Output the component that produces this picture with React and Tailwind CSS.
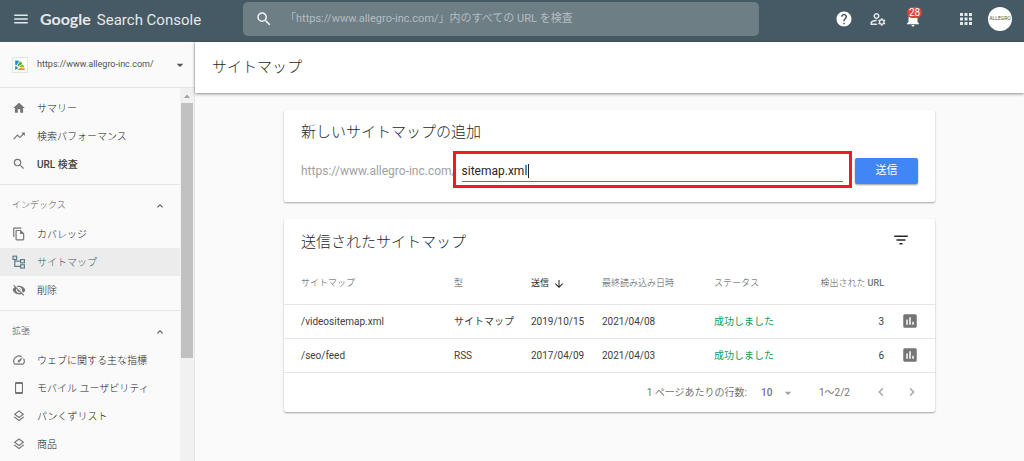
import {
  MdApps,
  MdArrowDownward,
  MdArrowDropDown,
  MdChevronLeft,
  MdChevronRight,
  MdExpandLess,
  MdFilterList,
  MdHelp,
  MdHome,
  MdInsertChart,
  MdMenu,
  MdNotifications,
  MdOutlineFileCopy,
  MdOutlineLayers,
  MdOutlineManageAccounts,
  MdSearch,
  MdSpeed,
  MdTrendingUp,
  MdVisibilityOff,
} from 'react-icons/md';

const SITE = 'https://www.allegro-inc.com/';

function SitemapIcon() {
  return (
    <svg viewBox="0 0 14 14" className="size-3.5" fill="none" stroke="currentColor" strokeWidth="1.2">
      <rect x="1" y="1.2" width="3.6" height="3.2" />
      <rect x="8.6" y="4.6" width="3.8" height="3.2" />
      <rect x="8.6" y="9.8" width="3.8" height="3.2" />
      <path d="M2.8 4.4v7h5.8M2.8 6.2h5.8" />
    </svg>
  );
}

function PhoneIcon() {
  return (
    <svg viewBox="0 0 14 14" className="size-3.5" fill="currentColor">
      <path fillRule="evenodd" d="M4 1h6a1 1 0 0 1 1 1v10a1 1 0 0 1-1 1H4a1 1 0 0 1-1-1V2a1 1 0 0 1 1-1zm.1 2v8h5.8V3z" />
    </svg>
  );
}

function SiteLogo() {
  return (
    <svg viewBox="0 0 16 16" className="size-4">
      <rect x=".5" y=".5" width="15" height="15" fill="#fff" stroke="#e4e4e4" />
      <path d="M3.2 3.4l4 .3-2.6 4.5-1.4-.4z" fill="#1a8fd1" />
      <path d="M7.8 4.2c1.2.6 2.1 1.5 2.6 2.5L6.6 9.6 5.4 8.3z" fill="#5cb531" />
      <path d="M10.8 7.2c.8 1 1.3 2.2 1.4 3.4l-4.2-.3-.8-.5z" fill="#7ac31f" />
      <path d="M3.2 9l1.4.4 1.6 1.6-3 2z" fill="#1a8fd1" />
      <path d="M5.2 13l2.4-2 5.2.5V13z" fill="#f28c1c" />
    </svg>
  );
}

const groups = [
  {
    items: [
      { label: 'サマリー', icon: <MdHome className="size-3.5" /> },
      { label: '検索パフォーマンス', icon: <MdTrendingUp className="size-3.5" /> },
      { label: 'URL 検査', icon: <MdSearch className="size-3.5" />, strong: true },
    ],
  },
  {
    title: 'インデックス',
    items: [
      { label: 'カバレッジ', icon: <MdOutlineFileCopy className="size-3.5" /> },
      { label: 'サイトマップ', icon: <SitemapIcon />, active: true },
      { label: '削除', icon: <MdVisibilityOff className="size-3.5" /> },
    ],
  },
  {
    title: '拡張',
    items: [
      { label: 'ウェブに関する主な指標', icon: <MdSpeed className="size-3.5" /> },
      { label: 'モバイル ユーザビリティ', icon: <PhoneIcon /> },
      { label: 'パンくずリスト', icon: <MdOutlineLayers className="size-3.5" /> },
      { label: '商品', icon: <MdOutlineLayers className="size-3.5" /> },
    ],
  },
];

const sitemaps = [
  { path: '/videositemap.xml', type: 'サイトマップ', sent: '2019/10/15', read: '2021/04/08', urls: 3 },
  { path: '/seo/feed', type: 'RSS', sent: '2017/04/09', read: '2021/04/03', urls: 6 },
];

function Header() {
  return (
    <header className="flex h-[42px] shrink-0 items-center bg-[#455a64] pb-1 text-white">
      <button aria-label="メニュー" className="ml-3 text-gray-200">
        <MdMenu className="size-[18px]" />
      </button>
      <a href="#" className="ml-2.5 flex w-[203px] items-baseline gap-1.5 text-gray-200">
        <span className="font-[Lato] text-[16px] font-bold">Google</span>
        <span className="text-[15px]">Search Console</span>
      </a>
      <label className="flex h-[34px] w-[516px] items-center rounded-[5px] bg-[#6d7e85] pl-3">
        <MdSearch className="size-[18px] text-gray-100" />
        <input
          type="search"
          aria-label="URL 検査"
          placeholder={`「${SITE}」内のすべての URL を検査`}
          className="ml-3 flex-1 bg-transparent text-[11px] outline-none placeholder:text-[#b4bdc1]"
        />
      </label>
      <div className="ml-auto flex items-center pr-3">
        <button aria-label="ヘルプ">
          <MdHelp className="size-[18px]" />
        </button>
        <button aria-label="ユーザーと権限" className="ml-4 text-gray-200">
          <MdOutlineManageAccounts className="size-[18px]" />
        </button>
        <button aria-label="通知" className="relative ml-[17px]">
          <MdNotifications className="size-[18px]" />
          <span className="absolute -top-[3px] left-[3px] rounded-full bg-[#db4437] px-0.5 text-[10px] leading-[11px]">
            28
          </span>
        </button>
        <button aria-label="アプリ" className="ml-[35px] text-gray-200">
          <MdApps className="size-[18px]" />
        </button>
        <button
          aria-label="アカウント"
          className="ml-[13px] flex size-6 items-center justify-center overflow-hidden rounded-full bg-white text-[5px] text-neutral-600"
        >
          ALLEGRO
        </button>
      </div>
    </header>
  );
}

function NavItem({ item }) {
  return (
    <a
      href="#"
      className={`flex h-7 items-center gap-[11px] pl-3 text-[10px] ${
        item.active ? 'bg-[#ececec] text-[#455a64]' : 'text-neutral-900'
      }`}
    >
      <span className={item.active ? 'text-[#607d8b]' : 'text-[#757575]'}>{item.icon}</span>
      <span className={item.strong ? 'font-medium text-neutral-700' : 'font-light'}>{item.label}</span>
    </a>
  );
}

function Sidebar() {
  return (
    <aside className="flex w-[195px] shrink-0 flex-col border-r border-neutral-200 bg-[#fafafa]">
      <button className="flex h-[46px] shrink-0 items-center border-b border-neutral-200 pl-3 text-[9px] text-neutral-600">
        <SiteLogo />
        <span className="ml-[9px]">{SITE}</span>
        <MdArrowDropDown className="mr-1.5 ml-auto size-4" />
      </button>
      <div className="flex min-h-0 flex-1">
        <nav className="flex-1 overflow-hidden">
          {groups.map((group, i) => (
            <section key={i} className="border-b border-neutral-200 py-1.5">
              {group.title && (
                <h2 className="flex h-[29px] items-center justify-between pr-3.5 pl-3 text-[9px] font-light text-neutral-600">
                  {group.title}
                  <MdExpandLess className="size-3" />
                </h2>
              )}
              {group.items.map((item) => (
                <NavItem key={item.label} item={item} />
              ))}
            </section>
          ))}
        </nav>
        <div className="flex w-3.5 flex-col items-center bg-[#f1f1f1]">
          <svg viewBox="0 0 14 15" className="h-[15px] w-3.5 shrink-0">
            <path d="M4 10l3-3.5L10 10z" fill="#a3a3a3" />
          </svg>
          <div className="h-[255px] w-3 bg-[#c1c1c1]" />
        </div>
      </div>
    </aside>
  );
}

function AddSitemap() {
  return (
    <section className="rounded-xs bg-white px-[17px] pt-2.5 pb-[18px] shadow-[0_1px_2px_rgba(0,0,0,0.35)]">
      <h2 className="text-[15px] leading-6 font-light">新しいサイトマップの追加</h2>
      <form className="mt-3.5 flex items-center" onSubmit={(e) => e.preventDefault()}>
        <label htmlFor="sitemap-url" className="text-[12px] text-neutral-400">
          {SITE}
        </label>
        <div className="relative ml-[5px] flex h-[26px] flex-1 items-center">
          <input
            id="sitemap-url"
            defaultValue="sitemap.xml"
            className="h-[22px] w-full border-b border-[#3b78e7] bg-transparent text-[12px] text-neutral-800 caret-transparent outline-none"
          />
          {/* text cursor */}
          <div className="pointer-events-none absolute left-[66px] h-3.5 w-px bg-neutral-800" />
          <div className="pointer-events-none absolute -inset-x-[9px] -top-[7px] h-[37px] border-3 border-[#ed1c24]" />
        </div>
        <button className="ml-3 h-[26px] w-[63px] rounded-xs bg-[#4285f4] text-[11px] text-white shadow-[0_1px_2px_rgba(0,0,0,0.4)]">
          送信
        </button>
      </form>
    </section>
  );
}

function SitemapTable() {
  return (
    <section className="rounded-xs bg-white shadow-[0_1px_2px_rgba(0,0,0,0.35)]">
      <div className="flex h-[45px] items-center justify-between pr-[25px] pl-[17px]">
        <h2 className="text-[15px] leading-6 font-light">送信されたサイトマップ</h2>
        <button aria-label="フィルタ" className="mb-1">
          <MdFilterList className="size-[18px]" />
        </button>
      </div>
      <table className="w-full table-fixed text-left text-[10px]">
        <colgroup>
          <col />
          <col className="w-[77px]" />
          <col className="w-[71px]" />
          <col className="w-28" />
          <col className="w-[76px]" />
          <col className="w-[94px]" />
          <col className="w-[51px]" />
        </colgroup>
        <thead>
          <tr className="h-10 border-b border-neutral-200 text-[9px] text-neutral-600">
            <th className="pl-[17px] font-light">サイトマップ</th>
            <th className="font-light">型</th>
            <th className="font-normal text-neutral-800">
              <span className="flex items-center gap-1">
                送信
                <MdArrowDownward className="size-3" />
              </span>
            </th>
            <th className="font-light">最終読み込み日時</th>
            <th className="font-light">ステータス</th>
            <th className="text-right font-light">
              検出された <span className="font-medium text-neutral-500">URL</span>
            </th>
            <th aria-label="レポート" />
          </tr>
        </thead>
        <tbody>
          {sitemaps.map((row) => (
            <tr key={row.path} className="h-[34px] border-b border-neutral-200 text-neutral-700">
              <td className="pl-[17px]">{row.path}</td>
              <td>{row.type}</td>
              <td>{row.sent}</td>
              <td>{row.read}</td>
              <td className="text-[#0f9d58]">成功しました</td>
              <td className="text-right">{row.urls}</td>
              <td>
                <button aria-label="レポートを開く" className="mx-auto block text-[#757575]">
                  <MdInsertChart className="size-[18px]" />
                </button>
              </td>
            </tr>
          ))}
        </tbody>
      </table>
      <div className="flex h-[39px] items-center justify-end pr-[15px] text-[10px] text-neutral-500">
        <label htmlFor="rows">1 ページあたりの行数:</label>
        <div className="relative ml-3.5 w-[35px]">
          <select id="rows" className="w-full appearance-none bg-transparent font-medium outline-none">
            <option>10</option>
            <option>25</option>
          </select>
          <MdArrowDropDown className="pointer-events-none absolute top-0 right-0 size-4 text-neutral-400" />
        </div>
        <span className="ml-[23px]">1～2/2</span>
        <button aria-label="前へ" className="ml-[23px] text-neutral-400">
          <MdChevronLeft className="size-4" />
        </button>
        <button aria-label="次へ" className="ml-[15px] text-neutral-400">
          <MdChevronRight className="size-4" />
        </button>
      </div>
    </section>
  );
}

export default function App() {
  return (
    <div
      lang="ja"
      className="flex h-screen flex-col overflow-hidden bg-[#fafafa] font-['Roboto','Noto_Sans_CJK_JP',sans-serif] text-neutral-800"
    >
      <Header />
      <div className="flex min-h-0 flex-1">
        <Sidebar />
        <main className="flex-1">
          <div className="flex h-[51px] items-center bg-white pl-[17px] shadow-[0_1px_3px_rgba(0,0,0,0.45)]">
            <h1 className="text-[15px] font-light">サイトマップ</h1>
          </div>
          <div className="flex flex-col gap-[17px] px-[89px] pt-[17px]">
            <AddSitemap />
            <SitemapTable />
          </div>
        </main>
      </div>
    </div>
  );
}
